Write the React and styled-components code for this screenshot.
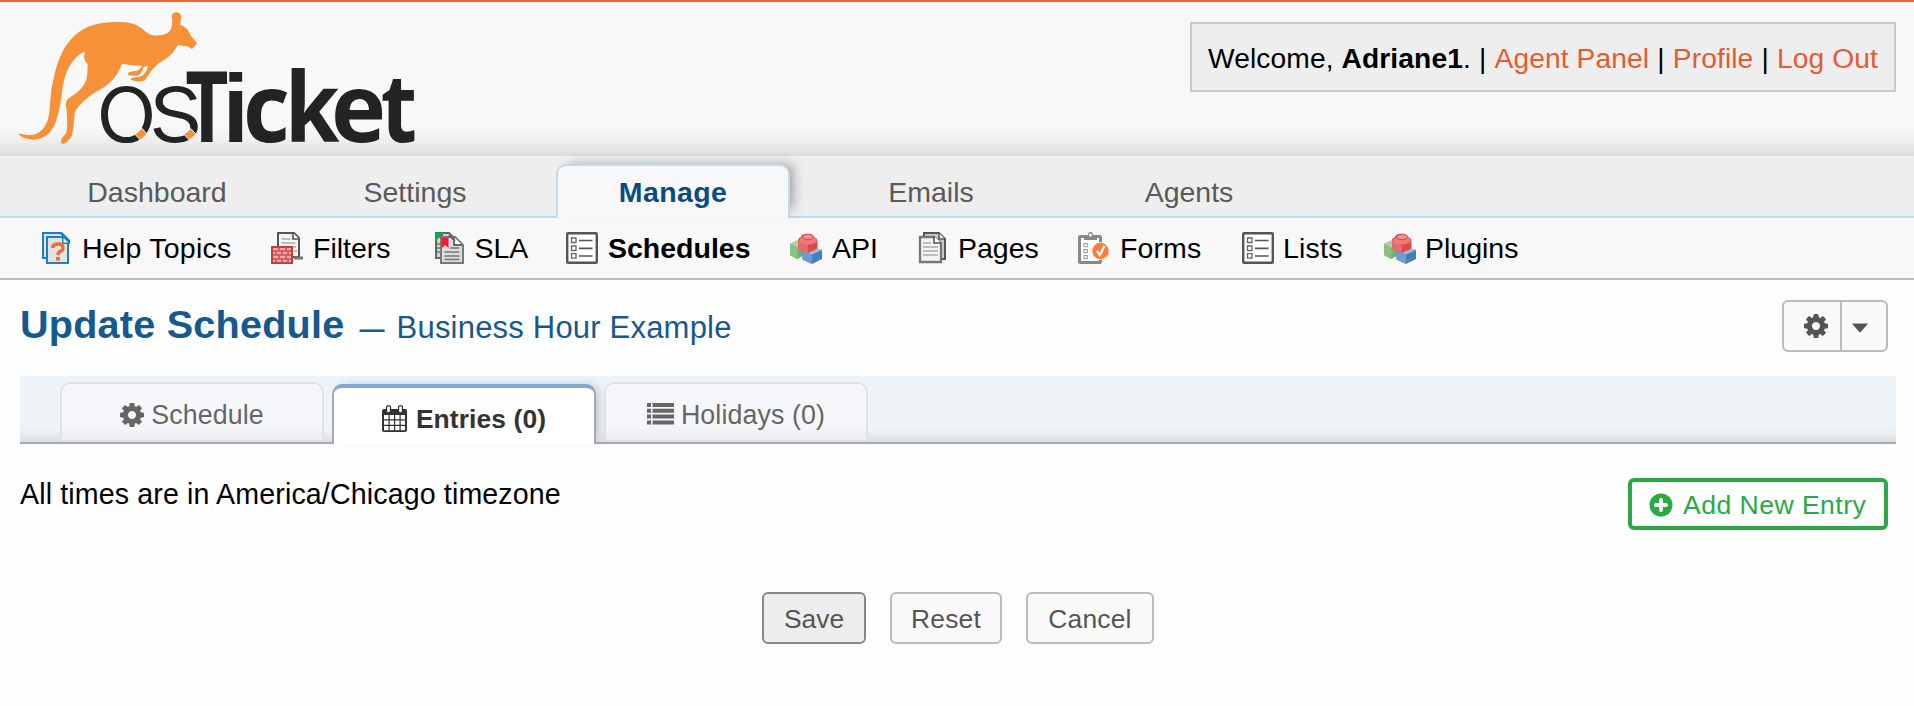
import React from 'react';
import styled, { createGlobalStyle } from 'styled-components';

const Global = createGlobalStyle`
  * { box-sizing: border-box; }
  body {
    margin: 0;
    background: #fefefe;
    color: #000;
    font-family: "Liberation Sans", Arial, sans-serif;
    font-size: 28.5px;
    line-height: 32px;
    letter-spacing: 0.1px;
  }
  a { text-decoration: none; color: inherit; }
`;

const Header = styled.header`
  height: 156px;
  border-top: 2px solid #f26531;
  padding: 0 18px;
  display: flex;
  justify-content: space-between;
  align-items: flex-start;
  background: linear-gradient(to bottom, #f8f8f8 0, #f8f8f8 126px, #efefef 138px, #dcdcdc 154px);
`;
const Logo = styled.svg`
  display: block;
  width: 404px;
  height: 144px;
  overflow: visible;
`;
const LogoLetter = styled.text`
  font-family: ${(p) => p.$font};
  font-weight: ${(p) => p.$weight};
  font-size: ${(p) => p.$size}px;
  letter-spacing: 0;
  fill: #222325;
`;
const Welcome = styled.p`
  margin: 20px 0 0;
  width: 706px;
  height: 70px;
  padding: 2px 16px 0;
  border: 2px solid #c9c9c9;
  background: #eee;
  display: flex;
  align-items: center;
  justify-content: space-between;
  font-size: 28.2px;
  white-space: pre;
  a { color: #e65a33; }
`;

const MainNav = styled.nav`
  height: 62px;
  padding: 8px 40px 0;
  display: flex;
  gap: 24px;
  background: #eee;
  border-bottom: 2px solid #c5d9ec;
`;
const MainTab = styled.a`
  width: 234px;
  height: ${(p) => (p.$active ? 54 : 52)}px;
  padding-top: ${(p) => (p.$active ? 10 : 12)}px;
  text-align: center;
  color: ${(p) => (p.$active ? '#0a4b80' : '#5a5a5a')};
  font-weight: ${(p) => (p.$active ? 700 : 400)};
  letter-spacing: ${(p) => (p.$active ? 0.4 : 0)}px;
  ${(p) => p.$active && `
    background: #f8f8f8;
    border: 2px solid #c5d9ec;
    border-bottom: 0;
    border-radius: 10px 10px 0 0;
    box-shadow: 8px -4px 12px -5px rgba(0, 0, 0, 0.34);
  `}
`;

const SubNav = styled.nav`
  height: 62px;
  padding: 14px 40px 0;
  display: flex;
  background: #f8f8f8;
  border-bottom: 2px solid #bbb;
`;
const SubItem = styled.a`
  width: ${(p) => p.$w}px;
  height: 32px;
  display: flex;
  gap: ${(p) => p.$gap || 9}px;
  line-height: 33px;
  letter-spacing: ${(p) => p.$ls || 0}px;
  white-space: nowrap;
  font-weight: ${(p) => (p.$active ? 700 : 400)};
  svg { flex: none; width: 32px; height: 32px; }
`;

const Content = styled.main`
  padding: 20px 18px 0 20px;
`;
const TitleRow = styled.div`
  height: 76px;
  padding-right: 8px;
  display: flex;
  justify-content: space-between;
  align-items: flex-start;
`;
const Title = styled.h2`
  margin: 1px 0 0;
  font-size: 39.6px;
  line-height: 46px;
  letter-spacing: 0.22px;
  color: #15598f;
  white-space: nowrap;
`;
const Subtitle = styled.small`
  margin-left: 15px;
  font-size: 31px;
  font-weight: 400;
  letter-spacing: 0.2px;
`;
const Dash = styled.span`
  margin-right: 12px;
  font-size: 25px;
  font-weight: 700;
`;
const ActionGroup = styled.div`
  width: 106px;
  height: 52px;
  display: flex;
  border: 2px solid #bbb;
  border-radius: 6px;
  background: #fafafa;
  color: #555;
`;
const ActionPart = styled.span`
  width: ${(p) => p.$w}px;
  padding: ${(p) => p.$top || 0}px 0 0 ${(p) => p.$pad}px;
  display: flex;
  align-items: center;
  & + & { border-left: 2px solid #bbb; }
`;

const TabBar = styled.div`
  height: 68px;
  padding: 6px 40px 0;
  display: flex;
  gap: 8px;
  background: #eef3f8;
  border-bottom: 2px solid #aaa;
  box-shadow: inset 0 -14px 14px -12px rgba(0, 0, 0, 0.14);
`;
const TabItem = styled.a`
  width: 264px;
  height: 58px;
  display: flex;
  justify-content: center;
  gap: 7px;
  padding-top: 13px;
  line-height: 36px;
  font-size: 26.8px;
  color: #666;
  border: 2px solid #dfe1e4;
  border-bottom: 0;
  border-radius: 10px 10px 0 0;
  background: linear-gradient(to bottom, #f6f7fb 70%, #eceef2);
  white-space: nowrap;
  svg { flex: none; margin-top: 6px; }
  ${(p) => p.$active && `
    margin-top: 2px;
    height: 60px;
    padding-top: 13px;
    gap: 9px;
    color: #333;
    font-size: 26.4px;
    font-weight: 700;
    background: #fff;
    border-color: #aaa;
    border-top: 4px solid #81a9d7;
    box-shadow: 6px -2px 12px -5px rgba(0, 0, 0, 0.25);
    svg { margin-top: 4px; }
  `}
`;

const EntriesRow = styled.div`
  padding: 34px 8px 0 0;
  display: flex;
  justify-content: space-between;
  align-items: flex-start;
`;
const Note = styled.div`
  font-size: 28.6px;
  letter-spacing: 0.13px;
`;
const AddButton = styled.a`
  width: 260px;
  height: 52px;
  padding: 1px 0 0 17px;
  display: flex;
  align-items: center;
  gap: 10px;
  border: 4px solid #28ab44;
  border-radius: 6px;
  background: #fff;
  color: #28ab44;
  font-size: 26.6px;
  letter-spacing: 0.45px;
  white-space: nowrap;
`;
const FormActions = styled.div`
  margin: 62px 0 0 742px;
  display: flex;
  gap: 24px;
`;
const Button = styled.button`
  width: ${(p) => p.$w}px;
  height: 52px;
  padding: 1px 0 0;
  font: inherit;
  font-size: 26.4px;
  letter-spacing: ${(p) => (p.$primary ? 0 : 0.2)}px;
  color: #555;
  background: ${(p) => (p.$primary ? '#ededed' : '#fafafa')};
  border: 2px solid ${(p) => (p.$primary ? '#888' : '#bbb')};
  border-radius: 6px;
`;

const GEAR =
  'M1024 896q0 106-75 181t-181 75-181-75-75-181 75-181 181-75 181 75 75 181zm512-109v222q0 12-8 23t-20 13l-185 28q-19 54-39 91 35 50 107 138 10 12 10 25t-9 23q-27 37-99 108t-94 71q-12 0-26-9l-138-108q-44 23-91 38-16 136-29 186-7 28-36 28h-222q-14 0-24.5-8.5t-11.5-21.5l-28-184q-49-16-90-37l-141 107q-10 9-25 9-14 0-25-11-126-114-165-168-7-10-7-23 0-12 8-23 15-21 51-66.5t54-70.5q-27-50-41-99l-183-27q-13-2-21-12.5t-8-23.5v-222q0-12 8-23t19-13l186-28q14-46 39-92-40-57-107-138-10-12-10-24 0-10 9-23 26-36 98.5-107.5t94.5-71.5q13 0 26 10l138 107q44-23 91-38 16-136 29-186 7-28 36-28h222q14 0 24.5 8.5t11.5 21.5l28 184q49 16 90 37l142-107q9-9 24-9 13 0 25 10 129 119 165 170 7 8 7 22 0 12-8 23-15 21-51 66.5t-54 70.5q26 50 41 98l183 28q13 2 21 12.5t8 23.5z';

const Gear = () => (
  <svg width="24" height="24" viewBox="0 128 1536 1536"><path fill="currentColor" fillRule="evenodd" d={GEAR} /></svg>
);
const Caret = () => (
  <svg width="16" height="10" viewBox="0 0 16 10"><path fill="currentColor" d="M1 .5h14q1 0 .3 1L8.700 9q-.7.700-1.400 0L.7 1.500Q0 .500 1 .500z" /></svg>
);
const CalendarIcon = () => (
  <svg width="25" height="27" viewBox="0 0 25 27">
    <path fill="currentColor" d="M2 4h21q2 0 2 2v19q0 2-2 2H2q-2 0-2-2V6q0-2 2-2z" />
    <path fill="#fff" d="M2 10h4.500v4.300H2zM7.700 10h4.300v4.300H7.700zM13.200 10h4.300v4.300h-4.300zM18.700 10H23v4.300h-4.300zM2 15.500h4.500v4.300H2zM7.700 15.500h4.300v4.300H7.700zM13.200 15.500h4.300v4.300h-4.300zM18.700 15.500H23v4.300h-4.300zM2 21h4.500v4.300H2zM7.700 21h4.300v4.300H7.700zM13.200 21h4.300v4.300h-4.300zM18.700 21H23v4.300h-4.300z" />
    <rect x="4.500" y=".7" width="4" height="7.300" rx="2" fill="#fff" stroke="currentColor" strokeWidth="1.300" />
    <rect x="16.500" y=".7" width="4" height="7.300" rx="2" fill="#fff" stroke="currentColor" strokeWidth="1.300" />
  </svg>
);
const ListIcon = () => (
  <svg width="27" height="22" viewBox="0 0 27 22">
    <path fill="currentColor" d="M0 0h4v4H0zM5.500 0H27v4H5.500zM0 5.800h4v4H0zM5.500 5.800H27v4H5.500zM0 11.600h4v4H0zM5.500 11.600H27v4H5.500zM0 17.400h4v4H0zM5.500 17.400H27v4H5.500z" />
  </svg>
);
const PlusIcon = () => (
  <svg width="24" height="24" viewBox="0 0 24 24">
    <circle cx="12" cy="12" r="11.500" fill="currentColor" />
    <path stroke="#fff" strokeWidth="4" strokeLinecap="round" d="M12 7v10M7 12h10" />
  </svg>
);

const HelpIcon = () => (
  <svg viewBox="0 0 32 32">
    <path d="M3 1h17l5 5v20H3z" fill="#dfe7ee" stroke="#1d7fc4" strokeWidth="2" />
    <path d="M7 5h15l6 6v20H7z" fill="#e2e2e2" stroke="#1d7fc4" strokeWidth="2" />
    <path d="M19 0h3l8 8v4h-8V5z" fill="#1d7fc4" />
    <path d="M23.500 6v4.500h4.500z" fill="#fff" />
    <path d="M20 2.500v2l2-1z" fill="#fff" />
    <path d="M12.500 16q.5-4 5.500-4t5 4q0 2.500-3 3.600-2 .9-2 3.400" fill="none" stroke="#f36c35" strokeWidth="3.400" />
    <rect x="16" y="25" width="4" height="3.600" fill="#f36c35" />
  </svg>
);
const FiltersIcon = () => (
  <svg viewBox="0 0 32 32">
    <path d="M7 1h16l5 5v19H7z" fill="#f4f4f4" stroke="#555" strokeWidth="2" />
    <path d="M22 1v6h6" fill="#fff" stroke="#555" strokeWidth="1.600" />
    <path d="M10.500 7h9M10.500 11h14M19 15h6M23 19h3" stroke="#aaa" strokeWidth="1.700" />
    <path d="M23 26h9" stroke="#777" strokeWidth="3" />
    <rect x="1" y="15" width="20" height="16" fill="#f3aaaa" stroke="#c13b3f" strokeWidth="2" />
    <path d="M2 19h18M2 23h18M2 27h18M8 15v4M15 15v4M5 19v4M11 19v4M17 19v4M8 23v4M15 23v4M5 27v4M11 27v4M17 27v4" stroke="#cf5054" strokeWidth="1.600" />
  </svg>
);
const SlaIcon = () => (
  <svg viewBox="0 0 32 32">
    <path d="M2 1h13l6 6v19H2z" fill="#d4d4d4" stroke="#666" strokeWidth="2" />
    <path d="M1 0h8v8L5 5.500 1 10z" fill="#1b9e54" />
    <path d="M3 12h5M3 16h5M3 20h5" stroke="#777" strokeWidth="1.700" />
    <path d="M7 5h14l8 8v18H7z" fill="#dcdcdc" stroke="#777" strokeWidth="2" />
    <path d="M15 3l6 6M20 5v8h8" fill="#fff" stroke="#666" strokeWidth="1.800" />
    <path d="M8 6h6.500v10L11 13l-3 3z" fill="#ee1c2e" />
    <path d="M16 16h9M10.500 20h15M10.500 24h15M10.500 27.500h15" stroke="#777" strokeWidth="1.600" />
  </svg>
);
const ListsIcon = () => (
  <svg viewBox="0 0 32 32">
    <rect x="1.200" y="1.200" width="29.600" height="29.600" rx="1" fill="#fff" stroke="#555" strokeWidth="2.400" />
    <path d="M5.500 6h4.500v4.500H5.500zM5.500 14h4.500v4.500H5.500zM5.500 21.700h4.500v4.500H5.500z" fill="none" stroke="#666" strokeWidth="1.300" />
    <path d="M13 8.500h13.500M13 16.300h13.500M13 24h13.500" stroke="#555" strokeWidth="1.700" />
  </svg>
);
const BricksIcon = () => (
  <svg viewBox="0 0 32 32">
    <path d="M0 12l7-3.500 8 3.500v11l-8 4-7-4z" fill="#72b06c" />
    <path d="M0 12l7-3.500 8 3.500-7 4z" fill="#a8d3a2" />
    <path d="M7.500 16v11L0 23V12z" fill="#8bc184" />
    <path d="M12.500 18l9-3 10.500 3v9l-10 5-9.500-4.500z" fill="#4b7db6" />
    <path d="M12.500 18l9-3 10.500 3-10 4.500z" fill="#a0c0e4" />
    <path d="M12.500 18l9.500 4.500V32l-9.500-4.500z" fill="#6f9bce" />
    <ellipse cx="22" cy="17.500" rx="4" ry="2.500" fill="#8db2dc" />
    <path d="M8 8q0-2 3-3l1-2q5-2.500 11 0l1 2q3 1 3.500 3v8.500L18 21l-10-4z" fill="#dc4a4d" />
    <path d="M8 8l10 5v8L8 17z" fill="#ea6a6b" />
    <ellipse cx="18" cy="8.500" rx="9" ry="4" fill="#ee7b7c" />
    <ellipse cx="18" cy="5" rx="5.500" ry="2.700" fill="#f08f8f" stroke="#d94a4d" strokeWidth="1" />
  </svg>
);
const PagesIcon = () => (
  <svg viewBox="0 0 32 32">
    <path d="M6 1h15l6 6v20H6z" fill="#ccc" stroke="#555" strokeWidth="2" />
    <path d="M21 1v6h6" fill="#eee" stroke="#555" strokeWidth="1.500" />
    <path d="M2 5h14l7 6v19H2z" fill="#f4f4f4" stroke="#777" strokeWidth="2.300" />
    <path d="M16 4v7h7" fill="#fff" stroke="#555" strokeWidth="1.600" />
    <path d="M5 11h8M5 15h15M5 19h15M5 23h15" stroke="#aaa" strokeWidth="1.700" />
  </svg>
);
const FormsIcon = () => (
  <svg viewBox="0 0 32 32">
    <rect x="1.500" y="4.500" width="21" height="26" rx="1" fill="#fff" stroke="#888" strokeWidth="3" />
    <path d="M6 3h4q0-3 2.500-3T15 3h4v5H6z" fill="#888" />
    <circle cx="12.500" cy="3" r="1.500" fill="#fff" />
    <path d="M6 11.500h3.300v3.300H6zM6 17.500h3.300v3.300H6zM6 23.500h3.300v3.300H6z" fill="none" stroke="#999" strokeWidth="1.100" />
    <circle cx="22.500" cy="19" r="9" fill="#f8f8f8" />
    <circle cx="22.500" cy="19" r="8.200" fill="#f97f38" />
    <path d="M19 19l2.800 4 4.700-9" fill="none" stroke="#fff" strokeWidth="2.300" />
  </svg>
);

const THIN = 'Inter, sans-serif';
const BOLD = '"Open Sans", sans-serif';
const LETTERS = [
  { ch: 'o', x: 286, sx: 1.04, size: 304, weight: 300, font: THIN },
  { ch: 's', x: 442, sx: 1.08, size: 304, weight: 300, font: THIN },
  { ch: 'T', x: 556, sx: 0.76, size: 295, weight: 700, font: BOLD },
  { ch: 'i', x: 668, sx: 0.97, size: 290, weight: 700, font: '"Liberation Sans", sans-serif' },
  { ch: 'c', x: 729, sx: 0.96, size: 285, weight: 700, font: BOLD },
  { ch: 'k', x: 854, sx: 0.91, size: 291, weight: 700, font: BOLD },
  { ch: 'e', x: 993, sx: 0.98, size: 285, weight: 700, font: BOLD },
  { ch: 't', x: 1142, sx: 0.88, size: 285, weight: 700, font: BOLD },
];

const BrandLogo = () => (
  <Logo viewBox="54 6 1212 432">
    {LETTERS.map((l) => (
      <LogoLetter key={l.ch} $font={l.font} $weight={l.weight} $size={l.size} transform={`translate(${l.x} 426) scale(${l.sx} 1)`}>
        {l.ch}
      </LogoLetter>
    ))}
    <path d="M405 403l21-18 15 17-20 18zM552 403l21-17 15 17-20 17z" fill="#f6933a" stroke="#f8f8f8" strokeWidth="3" />
    <path
      fill="#f69137"
      d="M517 60C514 48 516 38 527 37C536 36 546 42 543 57L540 74C555 78 566 88 572 107C580 117 591 124 590 132L584 139L576 147L562 139C552 137 540 139 533 136C520 158 505 176 476 189C465 200 452 212 436 240C425 247 405 244 394 240C390 236 394 233 400 233L420 229C410 226 398 229 388 226C382 222 382 218 392 215L412 212C420 207 424 202 426 197C405 198 385 194 366 191C352 230 330 252 298 270C262 290 240 312 226 332C221 350 223 372 218 395C217 410 212 412 203 424C196 433 182 434 183 426C184 414 192 408 198 400C205 380 200 350 200 330C196 318 198 300 204 296C215 288 230 280 243 266C264 244 262 220 263 193C252 180 249 170 256 155C232 160 205 195 195 230C185 265 185 310 172 350C162 390 140 418 98 419C80 418 65 412 54 402C62 400 70 404 85 405C115 408 140 385 147 345C152 310 150 280 160 240C172 180 190 140 222 108C258 74 305 64 360 66C395 66 415 76 430 89C448 106 460 108 480 106C500 104 514 95 516 76Z"
    />
    <path d="M431 201l13-4q-4 22-21 32l-16 3q20-10 24-31z" fill="#f8f8f8" />
  </Logo>
);

const MAIN_TABS = ['Dashboard', 'Settings', 'Manage', 'Emails', 'Agents'];
const SUB_ITEMS = [
  { label: 'Help Topics', w: 231, Icon: HelpIcon, gap: 10, ls: 0.25 },
  { label: 'Filters', w: 162.5, Icon: FiltersIcon, gap: 10 },
  { label: 'SLA', w: 132.5, Icon: SlaIcon },
  { label: 'Schedules', w: 224, Icon: ListsIcon, gap: 10 },
  { label: 'API', w: 128, Icon: BricksIcon, gap: 10 },
  { label: 'Pages', w: 160, Icon: PagesIcon, gap: 8 },
  { label: 'Forms', w: 164, Icon: FormsIcon, gap: 10, ls: 0.1 },
  { label: 'Lists', w: 142, Icon: ListsIcon, ls: 0.2 },
  { label: 'Plugins', w: 140, Icon: BricksIcon },
];

export default function App() {
  return (
    <>
      <Global />
      <Header>
        <BrandLogo />
        <Welcome>
          <span>Welcome, <strong>Adriane1</strong>.</span>
          <span>|</span>
          <a>Agent Panel</a>
          <span>|</span>
          <a>Profile</a>
          <span>|</span>
          <a>Log Out</a>
        </Welcome>
      </Header>
      <MainNav>
        {MAIN_TABS.map((t) => <MainTab key={t} $active={t === 'Manage'}>{t}</MainTab>)}
      </MainNav>
      <SubNav>
        {SUB_ITEMS.map(({ label, w, Icon, gap, ls }) => (
          <SubItem key={label} $w={w} $gap={gap} $ls={ls} $active={label === 'Schedules'}><Icon />{label}</SubItem>
        ))}
      </SubNav>
      <Content>
        <TitleRow>
          <Title>Update Schedule<Subtitle><Dash>—</Dash>Business Hour Example</Subtitle></Title>
          <ActionGroup>
            <ActionPart $w={56} $pad={20}><Gear /></ActionPart>
            <ActionPart $w={46} $pad={10} $top={4}><Caret /></ActionPart>
          </ActionGroup>
        </TitleRow>
        <TabBar>
          <TabItem><Gear />Schedule</TabItem>
          <TabItem $active><CalendarIcon />Entries (0)</TabItem>
          <TabItem><ListIcon />Holidays (0)</TabItem>
        </TabBar>
        <EntriesRow>
          <Note>All times are in America/Chicago timezone</Note>
          <AddButton><PlusIcon />Add New Entry</AddButton>
        </EntriesRow>
        <FormActions>
          <Button $w={104} $primary>Save</Button>
          <Button $w={112}>Reset</Button>
          <Button $w={128}>Cancel</Button>
        </FormActions>
      </Content>
    </>
  );
}
